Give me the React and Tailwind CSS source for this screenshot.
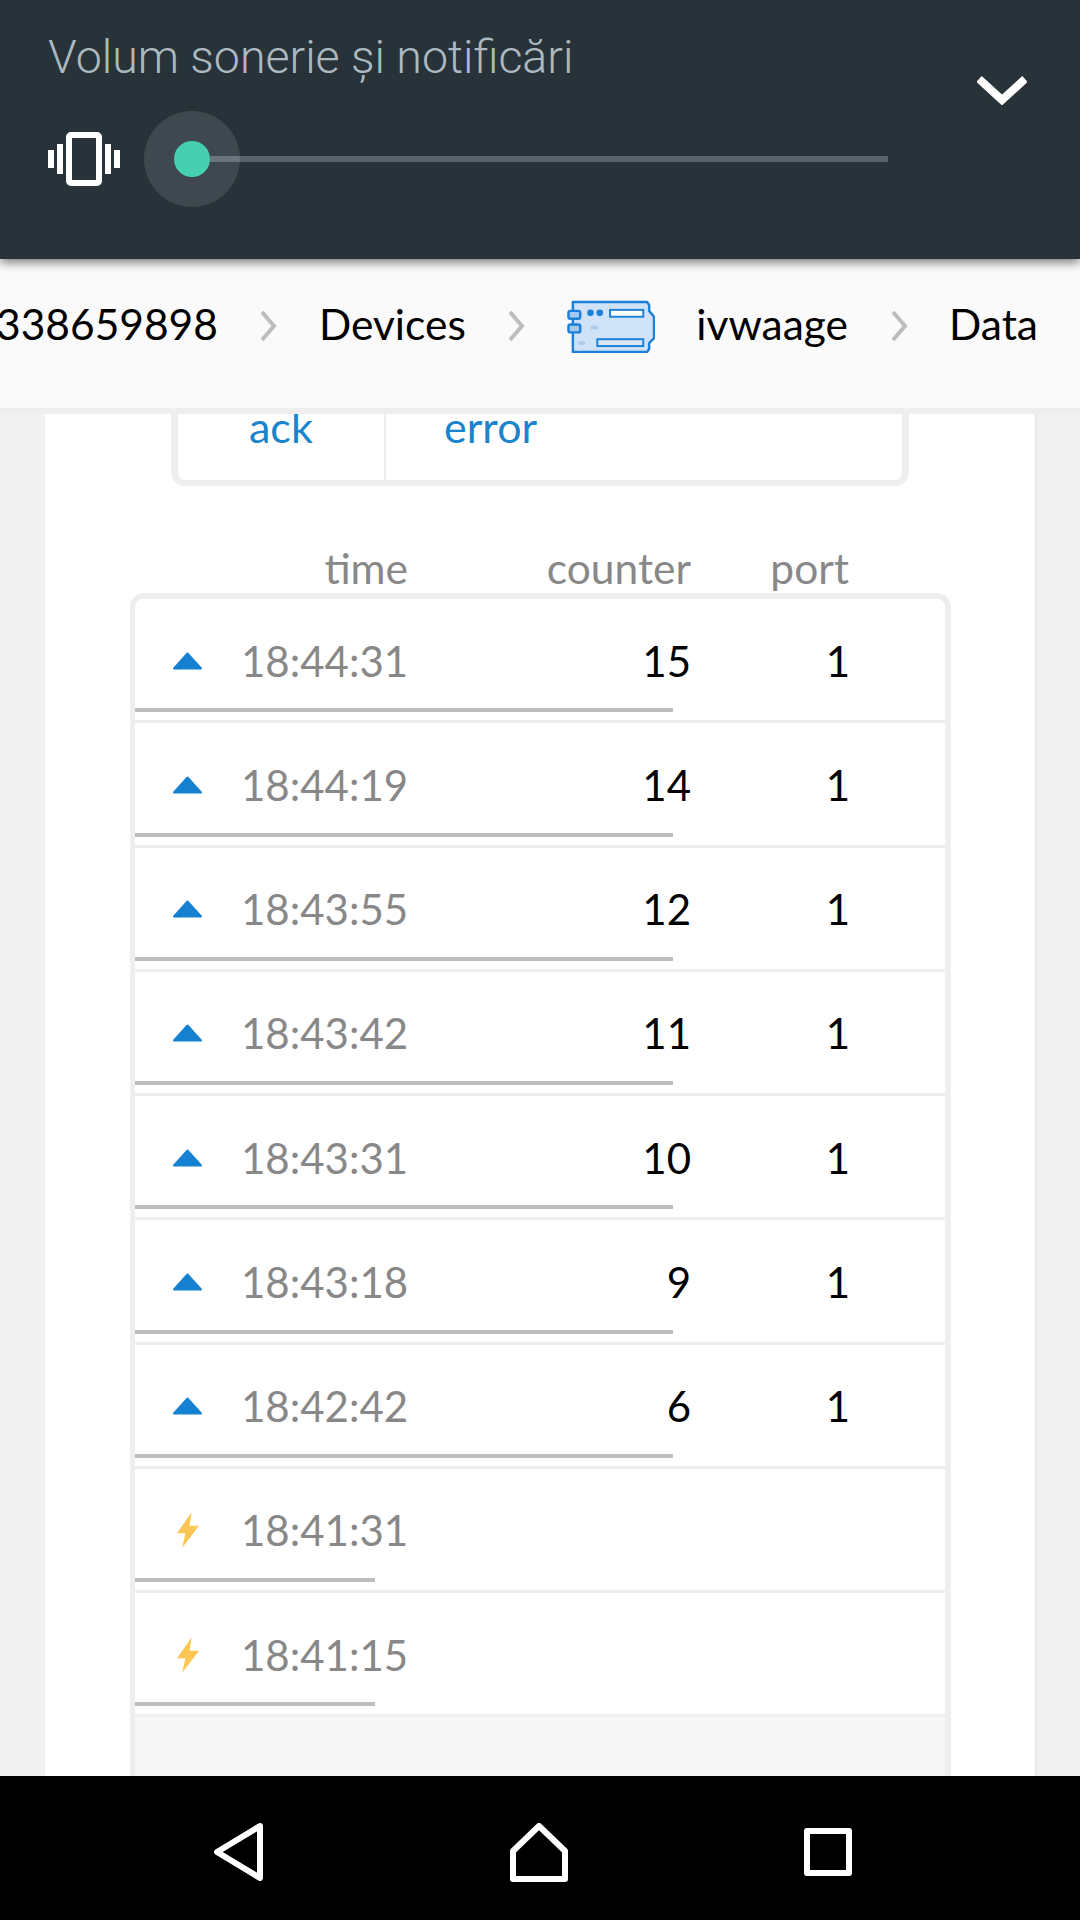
import React from "react";

const rows = [
  { time: "18:44:31", counter: "15", port: "1" },
  { time: "18:44:19", counter: "14", port: "1" },
  { time: "18:43:55", counter: "12", port: "1" },
  { time: "18:43:42", counter: "11", port: "1" },
  { time: "18:43:31", counter: "10", port: "1" },
  { time: "18:43:18", counter: "9", port: "1" },
  { time: "18:42:42", counter: "6", port: "1" },
  { time: "18:41:31", event: true },
  { time: "18:41:15", event: true },
];

const Chevron = () => (
  <svg width="18" height="34" viewBox="0 0 18 34" className="shrink-0 mt-1">
    <path d="M3 3l12 14L3 31" fill="none" stroke="#bdbdbd" strokeWidth="4" />
  </svg>
);

const BoardIcon = () => (
  <svg width="88" height="53" viewBox="0 0 90 54" className="shrink-0 mt-1.5">
    <path
      d="M6 2h76l2 3v6l5 6v22l-5 5v6l-2 3H6z"
      fill="#cfe2f7"
      stroke="#1c80d8"
      strokeWidth="2.5"
      strokeLinejoin="round"
    />
    <rect x="1.5" y="11" width="12" height="8" rx="2" fill="#a4c8f0" stroke="#1c80d8" strokeWidth="2.5" />
    <rect x="1.5" y="25" width="12" height="8" rx="2" fill="#a4c8f0" stroke="#1c80d8" strokeWidth="2.5" />
    <circle cx="24" cy="13" r="3.4" fill="#1c80d8" />
    <circle cx="33.5" cy="13" r="3.4" fill="#1c80d8" />
    <rect x="44" y="10" width="34" height="7" fill="#ffffff" stroke="#1c80d8" strokeWidth="2" />
    <rect x="24" y="26" width="8" height="4" rx="2" fill="#aecbeb" />
    <rect x="11" y="42" width="8" height="4" rx="2" fill="#aecbeb" />
    <rect x="31" y="40" width="47" height="7" fill="#dbe8f7" stroke="#1c80d8" strokeWidth="2" />
  </svg>
);

const UpIcon = () => (
  <svg width="29" height="18" viewBox="0 0 29 18">
    <path d="M14.5 1.5L28 16.5H1z" fill="#1581d0" stroke="#1581d0" strokeWidth="2" strokeLinejoin="round" />
  </svg>
);

const BoltIcon = () => (
  <svg width="22" height="36" viewBox="0 0 21 34">
    <path d="M14 0L0 20h8L5 34 21 13h-9z" fill="#fcc654" />
  </svg>
);

const App = () => {
  return (
    <div className="w-[1080px] h-[1920px] flex flex-col overflow-hidden bg-[#f1f1f1] font-['Lato',sans-serif]">
      <header className="relative z-10 h-[259px] shrink-0 flex justify-between bg-[#283339] shadow-[0_3px_10px_rgba(0,0,0,0.55)] pl-12 pr-[53px]">
        <div>
          <h1 className="mt-[30px] text-[46.5px] leading-[54px] text-[#adb9c0] font-['Roboto',sans-serif] font-light">
            Volum sonerie și notificări
          </h1>
          <div className="mt-12 flex items-center">
            <svg width="72" height="54" viewBox="0 0 72 54" className="shrink-0">
              <rect x="0" y="18" width="6" height="18" fill="#fff" />
              <rect x="9" y="12" width="6" height="30" fill="#fff" />
              <rect x="21" y="3" width="30" height="48" rx="2" fill="none" stroke="#fff" strokeWidth="6" />
              <rect x="57" y="12" width="6" height="30" fill="#fff" />
              <rect x="66" y="18" width="6" height="18" fill="#fff" />
            </svg>
            <div className="relative ml-[54px] w-[714px] h-[36px] flex items-center">
              <div className="absolute left-[-30px] top-[-30px] w-24 h-24 rounded-full bg-[#3e484e]" />
              <div className="absolute left-[36px] right-0 h-1.5 bg-[#596369]" />
              <div className="absolute left-[36px] w-[30px] h-1.5 bg-[#6b747a]" />
              <div className="relative w-9 h-9 rounded-full bg-[#45ceb0]" />
            </div>
          </div>
        </div>
        <svg width="50" height="31" viewBox="0 0 50 31" className="mt-[74px] shrink-0">
          <path d="M2 5l23 21L48 5" fill="none" stroke="#fff" strokeWidth="8" />
        </svg>
      </header>

      <nav className="h-[149px] shrink-0 flex items-center justify-end gap-[41.5px] bg-[#fafafa] pr-[42px] pb-[20px] text-[42.5px] text-black whitespace-nowrap overflow-hidden">
        <span>338659898</span>
        <Chevron />
        <span>Devices</span>
        <Chevron />
        <div className="flex items-center gap-[41.5px]">
          <BoardIcon />
          <span>ivwaage</span>
        </div>
        <Chevron />
        <span>Data</span>
      </nav>

      <main className="flex-1 min-h-0 border-t-[6px] border-[#eeeeee] overflow-hidden">
        <div className="ml-[45px] w-[992px] h-full bg-white border-r-2 border-[#e8e8e8] overflow-hidden">
          <div className="ml-[126px] w-[738px] h-[72px] flex border-x-[7px] border-b-[6px] border-[#eeeeee] rounded-b-[14px] text-[43px] text-[#1a85cc]">
            <div className="w-[208px] h-full border-r-2 border-[#eeeeee] pl-[71px] leading-[26px]">ack</div>
            <div className="pl-[58px] leading-[26px]">error</div>
          </div>

          <div className="mt-[56px] ml-[85px] w-[821px] grid grid-cols-[278px_283px_158px] text-right text-[42.5px] leading-[52px] text-[#888888]">
            <span>time</span>
            <span>counter</span>
            <span>port</span>
          </div>

          <div className="mt-[-1px] ml-[85px] w-[821px] h-[1200px] border-[6px] border-l-[5px] border-b-0 border-[#eeeeee] rounded-t-[14px] bg-[#f6f6f6] overflow-hidden">
            {rows.map((row) => (
              <div key={row.time} className="h-[124.25px] flex flex-col bg-white border-b-[3px] border-[#eeeeee] pb-2">
                <div className="flex-1 min-h-0 grid grid-cols-[106px_450px_159px] items-center text-[42px] leading-[52px] pt-[14px]">
                  <div className="pl-[38px] flex items-center h-full">
                    {row.event ? (
                      <div className="ml-1 flex">
                        <BoltIcon />
                      </div>
                    ) : (
                      <UpIcon />
                    )}
                  </div>
                  <div className="relative">
                    <span className="text-[#888888]">{row.time}</span>
                    <span className="absolute right-0 top-0 text-black">{row.counter}</span>
                  </div>
                  <span className="text-right text-black">{row.port}</span>
                </div>
                <div className={`h-1 bg-[#bdbdbd] ${row.event ? "w-[240px]" : "w-[538px]"}`} />
              </div>
            ))}
          </div>
        </div>
      </main>

      <footer className="relative z-10 h-[144px] shrink-0 flex items-center justify-center bg-black pt-2 pr-[14px]">
        <svg width="50" height="58" viewBox="0 0 50 58" className="mr-[246px]">
          <path d="M46 3L3 29l43 26z" fill="none" stroke="#fff" strokeWidth="6" strokeLinejoin="round" />
        </svg>
        <svg width="58" height="59" viewBox="0 0 58 59" className="mr-[236px]">
          <path d="M29 3L3 28v28h52V28z" fill="none" stroke="#fff" strokeWidth="6" strokeLinejoin="round" />
        </svg>
        <svg width="48" height="48" viewBox="0 0 48 48">
          <rect x="3" y="3" width="42" height="42" fill="none" stroke="#fff" strokeWidth="6" strokeLinejoin="round" />
        </svg>
      </footer>
    </div>
  );
};

export default App;
